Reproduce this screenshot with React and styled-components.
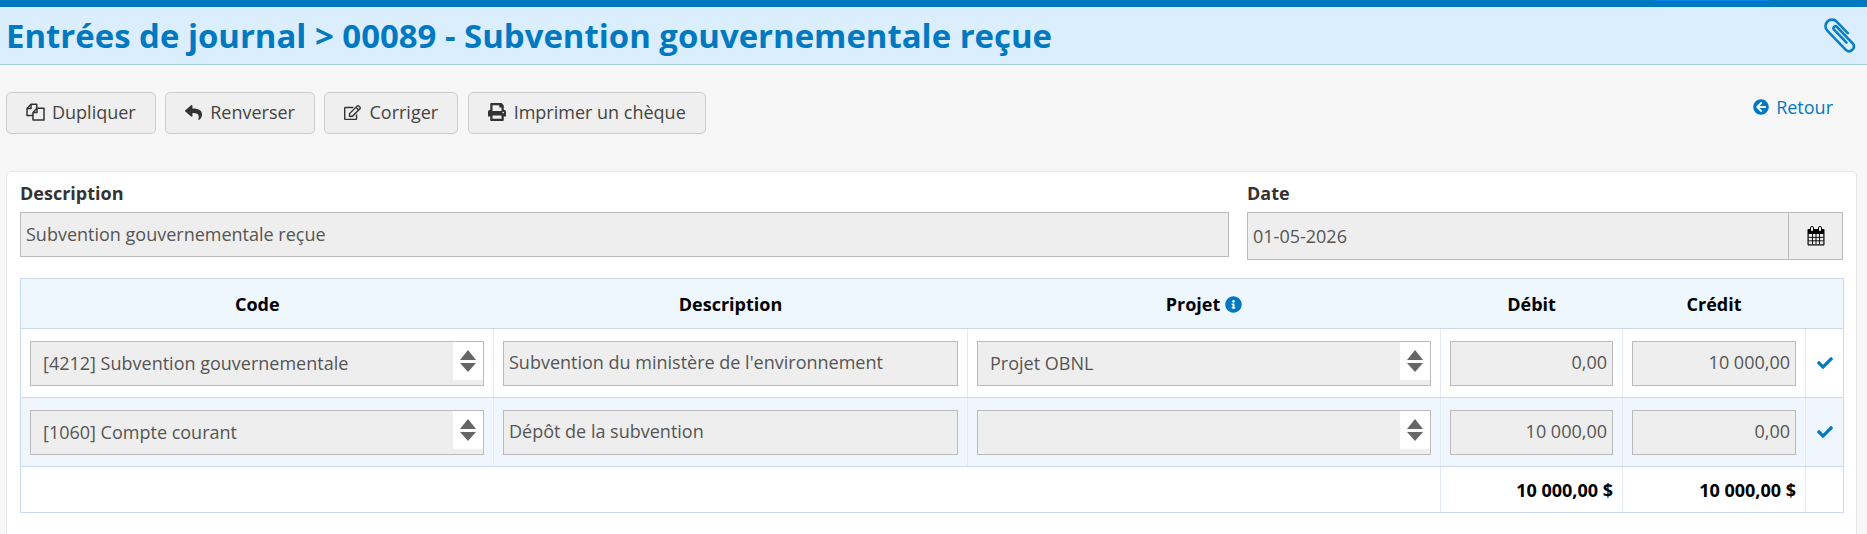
import React from 'react'
import styled, { createGlobalStyle } from 'styled-components'
import { FaReply, FaRegEdit, FaPrint, FaArrowCircleLeft, FaInfoCircle, FaCheck } from 'react-icons/fa'

const GlobalStyle = createGlobalStyle`
  html, body {
    margin: 0;
    height: 100%;
    overflow: hidden;
    background: #f7f7f7;
    font-family: "Open Sans", "Noto Sans", sans-serif;
    font-size: 18px;
    color: #444;
  }
`

const TopBar = styled.div`
  display: flex;
  justify-content: flex-end;
  height: 7px;
  padding-right: 98px;
  background: #0079c1;
`

const TopBarMark = styled.div`
  width: 114px;
  height: 1px;
  background: #0a87e6;
`

const Header = styled.header`
  display: flex;
  justify-content: space-between;
  align-items: center;
  height: 57px;
  padding: 0 9px 0 6px;
  background: #dbeefe;
  border-bottom: 1px solid #a6cfe6;
  border-top-right-radius: 5px;
`

const Title = styled.h1`
  margin: 0;
  font-size: 32.92px;
  font-weight: 700;
  color: #0079c1;
`

const Toolbar = styled.div`
  display: flex;
  justify-content: space-between;
  align-items: flex-start;
  padding: 27px 34px 37px 6px;
`

const ButtonRow = styled.div`
  display: flex;
  gap: 9.5px;
`

const Button = styled.button`
  display: flex;
  align-items: center;
  gap: 8px;
  height: 42px;
  padding: 0 19px 2px;
  font: inherit;
  color: #444;
  background: #efefef;
  border: 1px solid #ccc;
  border-radius: 5px;

  svg {
    flex: none;
    color: #333;
  }
`

const BackLink = styled.a`
  display: flex;
  align-items: center;
  gap: 7px;
  margin-top: 3px;
  color: #0079c1;
`

const Card = styled.section`
  margin: 0 10px 0 6px;
  padding: 10px 13px 40px;
  background: #fff;
  border: 1px solid #e6e6e6;
  border-radius: 5px;
`

const FormRow = styled.div`
  display: flex;
  align-items: flex-start;
  gap: 18px;
`

const Field = styled.div`
  width: ${p => p.$width}px;
  flex: none;
`

const Label = styled.div`
  height: 23px;
  margin-bottom: 7px;
  line-height: 23px;
  font-weight: 700;
  color: #333;
`

const Control = styled.div`
  display: flex;
  align-items: center;
  box-sizing: border-box;
  height: 45px;
  padding: 0 5px 2px;
  justify-content: ${p => (p.$right ? 'flex-end' : 'flex-start')};
  background: #eee;
  border: 1px solid #bbb;
  color: #555;
`

const DateGroup = styled.div`
  display: flex;
  height: 48px;
`

const DateValue = styled(Control)`
  flex: 1;
  height: 48px;
  padding-bottom: 0;
  border-right: none;
`

const DateAddon = styled.div`
  display: flex;
  align-items: center;
  justify-content: center;
  box-sizing: border-box;
  width: 55px;
  background: #eee;
  border: 1px solid #bbb;
`

const Table = styled.table`
  width: 1823px;
  margin-top: 18px;
  border-collapse: collapse;
  table-layout: fixed;

  th, td {
    box-sizing: border-box;
    padding: 0 9px;
    border: 1px solid #e4eaf2;
    border-top-color: #cbdaf3;
    border-bottom-color: #cbdaf3;
  }

  th {
    height: 50px;
    color: #000;
    font-weight: 700;
    text-align: center;
    background: #eef6fe;
    border-color: #cbdaf3;
    border-left: none;
    border-right: none;
  }

  th:first-child, td:first-child {
    border-left-color: #cbdaf3;
    border-left-style: solid;
    border-left-width: 1px;
  }

  th:last-child, td:last-child {
    border-right: 1px solid #cbdaf3;
  }
`

const Row = styled.tr`
  height: 69px;
  background: ${p => (p.$alt ? '#eff6fd' : '#fff')};
`

const TotalRow = styled.tr`
  height: 46px;
  background: #fff;

  td {
    color: #000;
    font-weight: 700;
    text-align: right;
  }
`

const SelectBox = styled(Control)`
  position: relative;
  margin-top: 1px;
  padding: 0 12px 2px;
`

const SelectArrows = styled.div`
  position: absolute;
  top: 0;
  right: 0;
  bottom: 5px;
  display: flex;
  align-items: center;
  justify-content: center;
  width: 30px;
  background: #fff;
`

const CheckCell = styled.td`
  color: #0079c1;
  && {
    padding: 0;
  }

  svg {
    display: block;
    margin: 0 auto;
  }
`

const InfoIcon = styled(FaInfoCircle)`
  margin-left: 5px;
  color: #0079c1;
  vertical-align: -2px;
`

const FilesGlyph = styled.svg`
  margin-right: -1px;
`

const FilesIcon = () => (
  <FilesGlyph width="19" height="18" viewBox="0 0 19 18" fill="none" stroke="#333" strokeWidth="1.5" strokeLinejoin="round">
    <path d="M7 12.5H1V5.5L5 1.2H10.7V5" />
    <path d="M5 1.2V5.5H1" />
    <path d="M7 9.5L11 5.2H18V17H7Z" fill="#efefef" />
    <path d="M11 5.2V9.5H7" />
  </FilesGlyph>
)

const CalendarIcon = () => (
  <svg width="18" height="20" viewBox="0 0 18 20">
    <rect x="0.5" y="3" width="17" height="16.5" rx="1" fill="#000" />
    <rect x="1.7" y="8" width="14.6" height="10.3" fill="#e8e8e8" />
    <path d="M5.5 8V18.3M9 8V18.3M12.5 8V18.3M1.7 11.4H16.3M1.7 14.8H16.3" stroke="#000" strokeWidth="0.9" />
    <rect x="3.5" y="0.5" width="3" height="5" rx="1.4" fill="#eee" stroke="#000" />
    <rect x="11.5" y="0.5" width="3" height="5" rx="1.4" fill="#eee" stroke="#000" />
  </svg>
)

const PaperclipIcon = () => (
  <svg width="34" height="37" viewBox="-17 -18.5 34 37" fill="none" stroke="#0a80c4" strokeWidth="2.6" strokeLinecap="round">
    <g transform="rotate(-44)">
      <path d="M6.5 3V-13A6.5 6.5 0 0 0-6.5-13V14A4.8 4.8 0 0 0 3 14V-9A2 2 0 0 0-1-9V9" />
    </g>
  </svg>
)

const UpDownIcon = () => (
  <svg width="16" height="22" viewBox="0 0 16 22" fill="#666">
    <path d="M8 0L16 10H0Z" />
    <path d="M0 13H16L8 22Z" />
  </svg>
)

const Select = ({ children }) => (
  <SelectBox>
    {children}
    <SelectArrows><UpDownIcon /></SelectArrows>
  </SelectBox>
)

const lines = [
  { code: '[4212] Subvention gouvernementale', description: "Subvention du ministère de l'environnement", project: 'Projet OBNL', debit: '0,00', credit: '10 000,00' },
  { code: '[1060] Compte courant', description: 'Dépôt de la subvention', project: '', debit: '10 000,00', credit: '0,00' },
]

export default function App() {
  return <>
    <GlobalStyle />
    <TopBar><TopBarMark /></TopBar>
    <Header>
      <Title>Entrées de journal &gt; 00089 - Subvention gouvernementale reçue</Title>
      <PaperclipIcon />
    </Header>
    <Toolbar>
      <ButtonRow>
        <Button><FilesIcon />Dupliquer</Button>
        <Button><FaReply size={17} />Renverser</Button>
        <Button><FaRegEdit size={17} />Corriger</Button>
        <Button><FaPrint size={18} />Imprimer un chèque</Button>
      </ButtonRow>
      <BackLink><FaArrowCircleLeft size={16} />Retour</BackLink>
    </Toolbar>
    <Card>
      <FormRow>
        <Field $width={1209}>
          <Label>Description</Label>
          <Control>Subvention gouvernementale reçue</Control>
        </Field>
        <Field $width={596}>
          <Label>Date</Label>
          <DateGroup>
            <DateValue>01-05-2026</DateValue>
            <DateAddon><CalendarIcon /></DateAddon>
          </DateGroup>
        </Field>
      </FormRow>
      <Table>
        <colgroup>
          <col style={{ width: 473 }} />
          <col style={{ width: 474 }} />
          <col style={{ width: 473 }} />
          <col style={{ width: 182 }} />
          <col style={{ width: 183 }} />
          <col style={{ width: 38 }} />
        </colgroup>
        <thead>
          <tr>
            <th>Code</th>
            <th>Description</th>
            <th>Projet<InfoIcon size={17} /></th>
            <th>Débit</th>
            <th>Crédit</th>
            <th />
          </tr>
        </thead>
        <tbody>
          {lines.map((line, i) => (
            <Row key={line.code} $alt={i % 2 === 1}>
              <td><Select>{line.code}</Select></td>
              <td><Control>{line.description}</Control></td>
              <td><Select>{line.project}</Select></td>
              <td><Control $right>{line.debit}</Control></td>
              <td><Control $right>{line.credit}</Control></td>
              <CheckCell><FaCheck size={16} /></CheckCell>
            </Row>
          ))}
          <TotalRow>
            <td colSpan={3} />
            <td>10 000,00 $</td>
            <td>10 000,00 $</td>
            <td />
          </TotalRow>
        </tbody>
      </Table>
    </Card>
  </>
}
